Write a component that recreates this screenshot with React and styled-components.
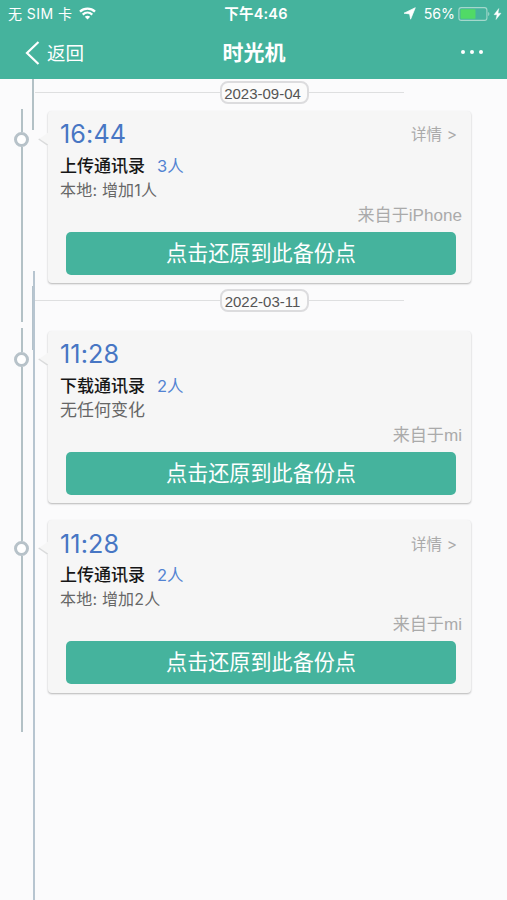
import React from 'react'
import styled, { createGlobalStyle } from 'styled-components';

const GlobalStyle = createGlobalStyle`
    * {
        box-sizing: border-box;
    }

    body {
        margin: 0;
        background: #fbfbfc;
        font-family: Inter, "Noto Sans CJK SC", sans-serif;
    }
`;

const Screen = styled.div`
    display: flex;
    flex-direction: column;
    width: 507px;
    height: 900px;
    overflow: hidden;
    background: #fbfbfc;
`;

const Header = styled.header`
    flex: none;
    height: 79px;
    background: #45b39d;
    color: #fff;
`;

const StatusBar = styled.div`
    display: grid;
    grid-template-columns: 1fr auto 1fr;
    align-items: center;
    height: 27px;
    padding: 0 5px 0 8px;
    font-size: 14px;
    line-height: 27px;
    white-space: nowrap;
`;

const StatusGroup = styled.div`
    display: flex;
    align-items: center;
    justify-content: ${props => props.end ? 'flex-end' : 'flex-start'};
`;

const Carrier = styled.span`
    letter-spacing: 0.45px;
    margin-right: 7px;
`;

const Clock = styled.span`
    padding-left: 2px;
    font-size: 14.5px;
    font-weight: 600;
    letter-spacing: 0.2px;
`;

const Percent = styled.span`
    margin: 0 3px 0 8px;
    font-size: 14.2px;
`;

const NavBar = styled.nav`
    display: grid;
    grid-template-columns: 1fr auto 1fr;
    align-items: center;
    height: 52px;
    padding: 0 24px 0 25px;
`;

const Back = styled.div`
    display: flex;
    align-items: center;
    gap: 7px;
    font-size: 18.5px;
    line-height: 26px;
`;

const Title = styled.h1`
    margin: 0;
    font-size: 21px;
    font-weight: 600;
    line-height: 26px;
`;

const More = styled.div`
    display: flex;
    justify-content: flex-end;
    gap: 5px;
    padding-bottom: 2px;
`;

const Dot = styled.i`
    width: 4px;
    height: 4px;
    border-radius: 50%;
    background: #fff;
`;

const Timeline = styled.main`
    display: flex;
    flex: 1;
    min-height: 0;
`;

const Track = styled.div`
    display: flex;
    flex: none;
    flex-direction: column;
    align-items: center;
    width: ${props => props.width}px;
    margin-left: ${props => props.offset}px;
`;

const Line = styled.div`
    flex: none;
    width: 2px;
    height: ${props => props.length}px;
    margin-top: ${props => props.gap || 0}px;
    background: ${props => props.color || '#b3c1c6'};
`;

const Node = styled.div`
    flex: none;
    width: 15px;
    height: 15px;
    border: 3px solid #b7c2c9;
    border-radius: 50%;
    background: #fff;
`;

const Days = styled.div`
    width: 437px;
`;

const DateRow = styled.div`
    display: grid;
    grid-template-columns: 185px auto 95px;
    justify-content: start;
    align-items: center;
    height: 23px;
    margin: ${props => props.first ? '2px 0 6.5px' : '-11px 0 18.5px'};
`;

const Rule = styled.div`
    height: 1px;
    background: #dedfe0;
`;

const DatePill = styled.div`
    width: 89px;
    height: 23px;
    padding-right: 4px;
    border: 2px solid #dcdcde;
    border-radius: 8px;
    background: #fbfbfb;
    color: #555;
    font: 15px/22px "Liberation Sans", sans-serif;
    text-align: center;
    white-space: nowrap;
`;

const Card = styled.article`
    position: relative;
    height: 172.5px;
    margin: 0 1px 17px 13px;
    padding: 8px 9px 0 12px;
    border-radius: 4px;
    background: #f6f6f6;
    box-shadow: 0 1px 2px rgba(0, 0, 0, 0.28);
`;

/* Speech-bubble tip pointing at the timeline node */
const Tip = styled.svg`
    position: absolute;
    left: -10px;
    top: 20px;
`;

const TimeRow = styled.div`
    display: flex;
    align-items: center;
    justify-content: space-between;
    height: 31px;
    padding-right: 5px;
`;

const Time = styled.span`
    color: #4776c4;
    font-size: 25.2px;
    letter-spacing: 0.1px;
`;

const Detail = styled.span`
    padding-bottom: 2px;
    color: #aaa;
    font-size: 15.5px;
    letter-spacing: 0.1px;
`;

const Action = styled.div`
    display: flex;
    gap: 12px;
    height: 31px;
    color: #161616;
    font-size: 17px;
    font-weight: 500;
    line-height: 33px;
`;

const Count = styled.span`
    color: #5283d2;
    font-size: 16.5px;
    font-weight: 400;
`;

const Change = styled.div`
    height: 18px;
    color: #666;
    font-size: ${props => props.large ? 17 : 16}px;
    letter-spacing: ${props => props.large ? 0 : 0.2}px;
    line-height: 18px;
    white-space: pre;
`;

const Source = styled.div`
    height: 33px;
    color: #aaa;
    font-family: "Liberation Sans", "Noto Sans CJK SC", sans-serif;
    font-size: 17.1px;
    line-height: 33px;
    text-align: right;
`;

const RestoreButton = styled.button`
    display: block;
    width: 390px;
    height: 43px;
    margin: 0 0 0 6px;
    padding: 0;
    border: 0;
    border-radius: 5px;
    background: #45b39d;
    color: #fff;
    font-family: inherit;
    font-size: 21.1px;
    line-height: 44px;
`;

const days = [
    {
        date: '2023-09-04',
        backups: [
            { time: '16:44', action: '上传通讯录', count: '3人', change: '本地: 增加1人', source: '来自于iPhone', detail: true }
        ]
    },
    {
        date: '2022-03-11',
        backups: [
            { time: '11:28', action: '下载通讯录', count: '2人', change: '无任何变化', source: '来自于mi', detail: false },
            { time: '11:28', action: '上传通讯录', count: '2人', change: '本地: 增加2人', source: '来自于mi', detail: true }
        ]
    }
]

function WifiIcon() {
    return (
        <svg width="17" height="13" viewBox="0 0 17 13" fill="none" stroke="#fff">
            <path d="M1 4.6C5.2.6 11.8.6 16 4.6" strokeWidth="2.3" />
            <path d="M3.7 7.6c2.8-2.6 6.8-2.6 9.6 0" strokeWidth="2.2" />
            <path d="M8.5 12.5 5.8 9.8c1.6-1.4 3.8-1.4 5.4 0z" fill="#fff" stroke="none" />
        </svg>
    )
}

function LocationIcon() {
    return (
        <svg width="13" height="13" viewBox="0 0 13 13">
            <path d="M12.3.7 7.6 12.2 6.6 6.9 1 6.2z" fill="#fff" stroke="#fff" strokeWidth=".7" strokeLinejoin="round" />
        </svg>
    )
}

function BatteryIcon() {
    return (
        <svg width="35" height="14" viewBox="0 0 35 14">
            <rect x=".9" y=".6" width="28" height="12.8" rx="2.4" fill="none" stroke="#a4d8cc" strokeWidth="1.1" />
            <rect x="2.5" y="2.2" width="15" height="9.6" rx=".8" fill="#50da66" />
            <path d="M30.2 5c1.6.6 1.6 3.4 0 4z" fill="#a4d8cc" />
        </svg>
    )
}

function BoltIcon() {
    return (
        <svg width="9" height="12" viewBox="0 0 9 12">
            <path d="M5.8.5 1 6.7h3L3 11.5l5-6.3H5z" fill="#fff" stroke="#fff" strokeWidth=".4" />
        </svg>
    )
}

function Backup({ backup }) {
    return (
        <Card>
            <Tip width="12" height="18" viewBox="0 0 12 18">
                <path d="M11 1 1 8l10 8z" fill="#f6f6f6" />
                <path d="m.7 8 9 6.2" fill="none" stroke="#dadbdc" strokeWidth="1.5" />
            </Tip>
            <TimeRow>
                <Time>{backup.time}</Time>
                {backup.detail && <Detail>详情 &gt;</Detail>}
            </TimeRow>
            <Action>
                {backup.action}
                <Count>{backup.count}</Count>
            </Action>
            <Change large={!backup.detail ? 1 : 0}>{backup.change}</Change>
            <Source>{backup.source}</Source>
            <RestoreButton>点击还原到此备份点</RestoreButton>
        </Card>
    )
}

function App() {

    return (
        <>
            <GlobalStyle />
            <Screen>
                <Header>
                    <StatusBar>
                        <StatusGroup>
                            <Carrier>无 SIM 卡</Carrier>
                            <WifiIcon />
                        </StatusGroup>
                        <Clock>下午4:46</Clock>
                        <StatusGroup end={1}>
                            <LocationIcon />
                            <Percent>56%</Percent>
                            <BatteryIcon />
                            <BoltIcon />
                        </StatusGroup>
                    </StatusBar>
                    <NavBar>
                        <Back>
                            <svg width="15" height="24" viewBox="0 0 15 24" fill="none" stroke="#fff" strokeWidth="2.2">
                                <path d="M13.5 1 2 12l11.5 11" />
                            </svg>
                            返回
                        </Back>
                        <Title>时光机</Title>
                        <More>
                            <Dot />
                            <Dot />
                            <Dot />
                        </More>
                    </NavBar>
                </Header>
                <Timeline>
                    <Track width={15} offset={14}>
                        <Line gap={30} length={23} />
                        <Node />
                        <Line length={175} />
                        <Line gap={6} length={24} />
                        <Node />
                        <Line length={174} />
                        <Node />
                        <Line length={176} />
                    </Track>
                    <Track width={2} offset={3}>
                        <Line length={51} />
                        <Line gap={156} length={64} color="#b4c2cb" />
                    </Track>
                    <Track width={2} offset={-1}>
                        <Line gap={192} length={629} color="#b7c5d0" />
                    </Track>
                    <Days>
                        {days.map((day, i) => (
                            <section key={day.date}>
                                <DateRow first={i === 0 ? 1 : 0}>
                                    <Rule />
                                    <DatePill>{day.date}</DatePill>
                                    <Rule />
                                </DateRow>
                                {day.backups.map((backup, j) => <Backup key={j} backup={backup} />)}
                            </section>
                        ))}
                    </Days>
                </Timeline>
            </Screen>
        </>
    )

}

export default App
